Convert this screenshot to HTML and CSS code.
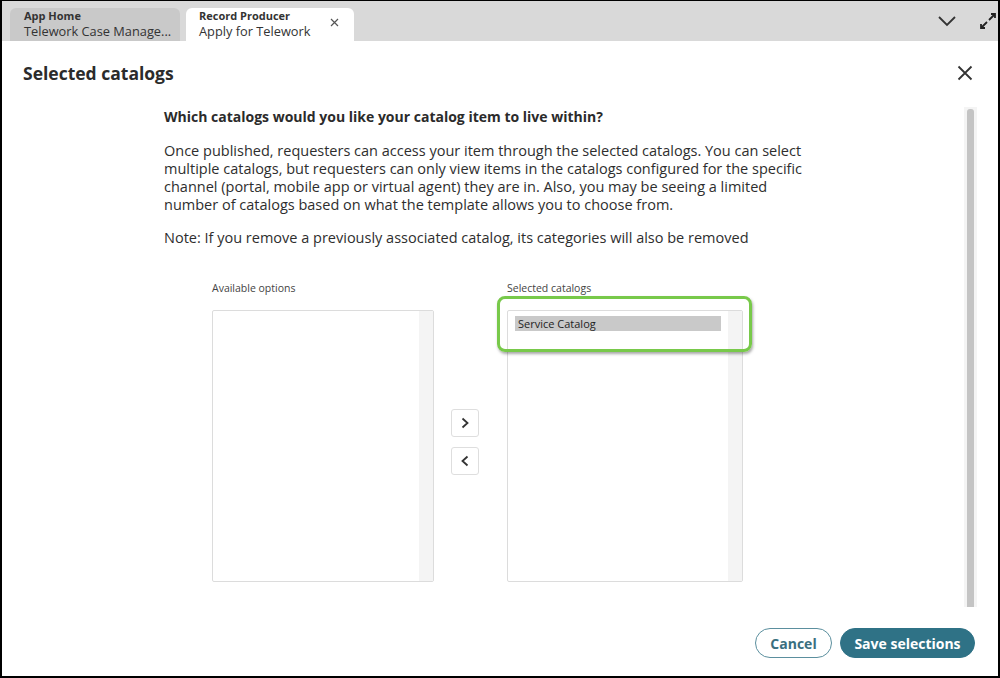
FILE: index.html
```html
<!DOCTYPE html>
<html>
<head>
<meta charset="utf-8">
<link rel="stylesheet" href="styles.css">
</head>
<body>
<div class="frame">
  <div class="tabbar">
    <div class="tab tab-inactive">
      <div class="tab-sub">App Home</div>
      <div class="tab-title">Telework Case Manage...</div>
    </div>
    <div class="tab tab-active">
      <div class="tab-text">
        <div class="tab-sub">Record Producer</div>
        <div class="tab-title">Apply for Telework</div>
      </div>
      <svg class="tab-close" width="9" height="9" viewBox="0 0 9 9"><path d="M1 1L8 8M8 1L1 8" stroke="#555" stroke-width="1.2"/></svg>
    </div>
    <div class="tab-tools">
      <svg width="20" height="12" viewBox="0 0 20 12"><path d="M2 2L10 10L18 2" fill="none" stroke="#333" stroke-width="1.8"/></svg>
      <svg width="18" height="18" viewBox="0 0 18 18"><path d="M10 8L16 2M12 2H16V6M8 10L2 16M2 12V16H6" fill="none" stroke="#222" stroke-width="1.8"/></svg>
    </div>
  </div>
  <div class="modal">
    <div class="modal-header">
      <h1 class="modal-title">Selected catalogs</h1>
      <svg class="modal-close" width="16" height="16" viewBox="0 0 16 16"><path d="M1.5 1.5L14.5 14.5M14.5 1.5L1.5 14.5" stroke="#333" stroke-width="1.8"/></svg>
    </div>
    <div class="modal-body">
      <div class="content">
        <p class="question">Which catalogs would you like your catalog item to live within?</p>
        <p class="desc">Once published, requesters can access your item through the selected catalogs. You can select multiple catalogs, but requesters can only view items in the catalogs configured for the specific channel (portal, mobile app or virtual agent) they are in. Also, you may be seeing a limited number of catalogs based on what the template allows you to choose from.</p>
        <p class="note">Note: If you remove a previously associated catalog, its categories will also be removed</p>
        <div class="slush">
          <div class="list-col">
            <div class="list-label">Available options</div>
            <div class="listbox listbox-left">
              <div class="list-items"></div>
              <div class="list-scroll"></div>
            </div>
          </div>
          <div class="arrows">
            <button class="arrow-btn"><svg width="10" height="12" viewBox="0 0 10 12"><path d="M2.5 1.5L7.5 6L2.5 10.5" fill="none" stroke="#333" stroke-width="1.8"/></svg></button>
            <button class="arrow-btn"><svg width="10" height="12" viewBox="0 0 10 12"><path d="M7.5 1.5L2.5 6L7.5 10.5" fill="none" stroke="#333" stroke-width="1.8"/></svg></button>
          </div>
          <div class="list-col">
            <div class="list-label">Selected catalogs</div>
            <div class="listbox listbox-right">
              <div class="list-items">
                <div class="list-item selected">Service Catalog</div>
              </div>
              <div class="list-scroll"></div>
              <div class="highlight"></div>
            </div>
          </div>
        </div>
      </div>
      <div class="scroll-track"><div class="scroll-thumb"></div></div>
    </div>
    <div class="modal-footer">
      <button class="btn btn-secondary">Cancel</button>
      <button class="btn btn-primary">Save selections</button>
    </div>
  </div>
</div>
</body>
</html>
```

FILE: styles.css
```css
* { box-sizing: border-box; }
html, body { margin: 0; padding: 0; }
body {
  font-family: "Open Sans", "Liberation Sans", sans-serif;
  color: #2e2e2e;
  background: #fff;
}
.frame {
  width: 1000px;
  height: 678px;
  border: 2px solid #000;
  border-top-width: 1px;
  display: flex;
  flex-direction: column;
  overflow: hidden;
}
.tabbar {
  height: 40px;
  background: #d9d9d9;
  display: flex;
  align-items: flex-end;
  padding-left: 8px;
  gap: 6px;
  flex-shrink: 0;
}
.tab {
  height: 33px;
  border-radius: 6px 6px 0 0;
  padding: 1px 0 0 14px;
}
.tab-inactive {
  width: 170px;
  background: #c9c9c9;
}
.tab-active {
  width: 168px;
  background: #fff;
  display: flex;
  justify-content: space-between;
  padding-left: 13px;
  padding-right: 15px;
}
.tab-sub {
  font-size: 11px;
  font-weight: 700;
  line-height: 14px;
  color: #333;
}
.tab-title {
  font-size: 12.8px;
  line-height: 17px;
  color: #333;
  white-space: nowrap;
}
.tab-close { margin-top: 9px; }
.tab-tools {
  margin-left: auto;
  align-self: stretch;
  display: flex;
  align-items: center;
  gap: 22px;
  padding-right: 1px;
}
.modal {
  flex: 1;
  display: flex;
  flex-direction: column;
  min-height: 0;
}
.modal-header {
  height: 66px;
  display: flex;
  align-items: center;
  justify-content: space-between;
  padding: 0 25px 0 21px;
  flex-shrink: 0;
}
.modal-title {
  margin: 0;
  font-size: 17.5px;
  font-weight: 700;
  color: #2b2b2b;
  padding-bottom: 2px;
}
.modal-close { margin-bottom: 2px; }
.modal-body {
  flex: 1;
  display: flex;
  min-height: 0;
}
.content {
  flex: 1;
  padding-left: 162px;
  padding-top: 1px;
}
.question {
  margin: 0;
  font-size: 14px;
  font-weight: 700;
  line-height: 18px;
  color: #2b2b2b;
}
.desc {
  margin: 16px 0 0;
  font-size: 14.5px;
  line-height: 18px;
  width: 652px;
  color: #2e2e2e;
}
.note {
  margin: 15px 0 0;
  font-size: 14.5px;
  line-height: 18px;
}
.slush {
  display: flex;
  margin-top: 34px;
  padding-left: 48px;
}
.list-label {
  font-size: 10.5px;
  line-height: 14px;
  color: #444;
  margin-bottom: 15px;
}
.listbox {
  position: relative;
  height: 272px;
  border: 1px solid #dcdcdc;
  border-radius: 2px;
  display: flex;
  background: #fff;
}
.listbox-left { width: 222px; }
.listbox-right { width: 236px; }
.list-items {
  flex: 1;
  padding: 5px 7px;
}
.list-scroll {
  width: 14px;
  background: #f4f4f4;
}
.list-item {
  font-size: 11px;
  line-height: 15px;
  padding-left: 3px;
  color: #222;
}
.list-item.selected {
  background: #c9c9c9;
  width: 206px;
}
.highlight {
  position: absolute;
  left: -11px;
  top: -15px;
  width: 255px;
  height: 56px;
  border: 3.5px solid #78c94a;
  border-radius: 8px;
  box-shadow: 1px 2px 3px rgba(0,0,0,0.35);
  pointer-events: none;
}
.arrows {
  display: flex;
  flex-direction: column;
  gap: 10px;
  margin: 128px 28px 0 17px;
}
.arrow-btn {
  width: 28px;
  height: 28px;
  border: 1px solid #dedede;
  border-radius: 3px;
  background: #fff;
  padding: 0;
  display: flex;
  align-items: center;
  justify-content: center;
}
.scroll-track {
  width: 13px;
  margin-right: 21px;
  background: #f4f4f4;
  padding: 2px 3px 0;
  height: 500px;
}
.scroll-thumb {
  height: 100%;
  background: #c4c4c4;
  border-radius: 3px 3px 0 0;
}
.modal-footer {
  height: 68px;
  flex-shrink: 0;
  display: flex;
  justify-content: flex-end;
  align-items: flex-start;
  padding: 20px 23px 0 0;
  gap: 8px;
}
.btn {
  height: 30px;
  border-radius: 15px;
  font-family: "Open Sans", "Liberation Sans", sans-serif;
  font-size: 14px;
  font-weight: 700;
  padding: 0;
}
.btn-secondary {
  width: 77px;
  background: #fff;
  border: 1.5px solid #5b8f9e;
  color: #3a6f80;
}
.btn-primary {
  width: 135px;
  background: #2f7286;
  border: 1px solid #2f7286;
  color: #fff;
}
```
